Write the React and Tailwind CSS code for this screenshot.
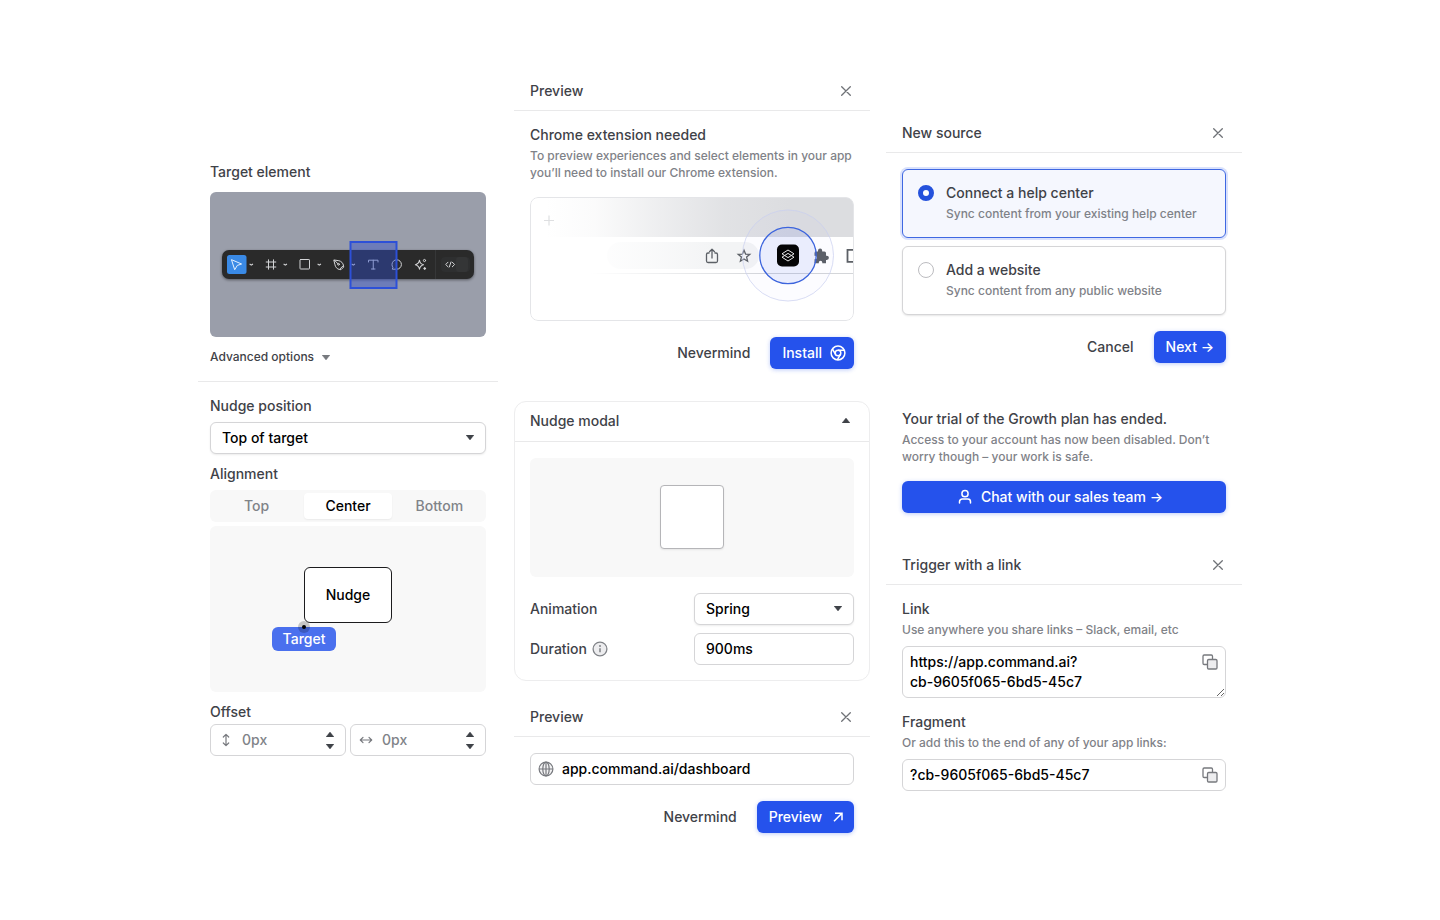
import { useState } from "react";

const LABEL = "text-sm leading-5 font-medium text-[#3f4248]";
const HINT = "text-xs leading-[17px] font-medium text-[#7f8288]";
const FIELD = "h-8 w-full rounded-md border border-[#d5d5d7] bg-white text-sm leading-5 font-medium outline-none";
const PRIMARY = "flex h-8 items-center justify-center rounded-md bg-[#2552ec] px-3 text-sm leading-5 font-medium text-white shadow-[0_1px_4px_rgba(37,82,236,0.3)]";
const PLAIN = "h-8 px-1 text-sm leading-5 font-medium text-[#3f4248]";

function Caret({ up = false, className = "" }) {
  return (
    <svg width="8" height="5" viewBox="0 0 8 5" aria-hidden="true" className={className}>
      <path d={up ? "M4 0 L8 5 H0 Z" : "M0 0 H8 L4 5 Z"} fill="currentColor" stroke="currentColor" strokeWidth=".4" strokeLinejoin="round" />
    </svg>
  );
}

function CloseButton() {
  return (
    <button type="button" aria-label="Close" className="flex size-4 items-center justify-center text-[#6f7277]">
      <svg width="10" height="10" viewBox="0 0 10 10" fill="none" stroke="currentColor" strokeWidth="1.3" strokeLinecap="round">
        <path d="M.7.7l8.6 8.6M9.3.7L.7 9.3" />
      </svg>
    </button>
  );
}

function PanelHeader({ title }) {
  return (
    <header className="flex h-10 items-center justify-between border-b border-[#e9e9ea] px-4">
      <h2 className={LABEL}>{title}</h2>
      <CloseButton />
    </header>
  );
}

function SelectField({ id, options }) {
  return (
    <div className="relative">
      <select id={id} className={`${FIELD} appearance-none px-[11px] text-black shadow-[0_1px_2px_rgba(0,0,0,0.08)]`}>
        {options.map((o) => (
          <option key={o}>{o}</option>
        ))}
      </select>
      <Caret className="pointer-events-none absolute top-[13px] right-3 text-[#3f4248]" />
    </div>
  );
}

function ToolbarDrawing() {
  const chevrons = [41, 75, 109, 143];
  return (
    <svg viewBox="0 0 276 145" className="block w-full rounded-md bg-[#9a9eaa]" role="img" aria-label="Toolbar with the text tool targeted">
      <defs>
        <filter id="barShadow" x="-10%" y="-50%" width="120%" height="220%">
          <feDropShadow dx="0" dy="1" stdDeviation="1.5" floodColor="#000" floodOpacity="0.45" />
        </filter>
      </defs>
      <rect x="12" y="58" width="252" height="29" rx="7" fill="#292a2b" filter="url(#barShadow)" />
      <path d="M225.500 58v29" stroke="#363738" />
      <rect x="231" y="65" width="29" height="15" rx="4" fill="#2e2f30" />
      <rect x="246" y="65" width="12" height="15" rx="3" fill="#343536" />
      <rect x="17" y="63" width="19.500" height="19" rx="2.500" fill="#3a8ae6" />
      <g fill="none" stroke="#d3d4d6" strokeWidth="1" strokeLinecap="round" strokeLinejoin="round">
        <path d="M21.800 67.800l9.800 4.200-4.300 1.400-2.400 4z" stroke="#e6f1ff" />
        {chevrons.map((x) => (
          <path key={x} d={`M${x - 1} 72.200l1.300.9 1.300-.9`} strokeWidth="1.100" />
        ))}
        <path d="M58.500 67.800v9.400M63.500 67.800v9.400M56.200 70h9.600M56.200 75h9.600" />
        <rect x="90" y="67.500" width="9.500" height="9.500" rx=".6" />
        <path d="M124.200 68l4.600.7c2.500.5 4.300 2.400 4.700 4.900l.2 1.400-2.700 2.700-1.400-.2c-2.500-.4-4.300-2.300-4.700-4.900zM124.500 68.300l3.600 3.600M129.700 77.200l3.800-3.800" />
        <circle cx="128.500" cy="72.300" r=".9" />
        <path d="M158.500 70v-1.800h9.500v1.800M163.250 68.200v8.800M161.500 77h3.500" />
        <path d="M182.700 77.200h4a4.700 4.700 0 1 0-4.700-4.700c0 1.400.3 1.800.7 2.600z" />
        <path d="M209.500 68.200c.4 3 1.200 3.800 4 4.500-2.800.7-3.600 1.500-4 4.500-.5-3-1.300-3.800-4.100-4.500 2.800-.7 3.600-1.500 4.100-4.500z" strokeWidth="1.100" />
        <circle cx="214.500" cy="68.500" r="1.100" />
        <circle cx="214.700" cy="76.500" r=".9" fill="#d3d4d6" />
        <path d="M238 70.200l-2.300 2.300 2.300 2.300M242.300 70.200l2.300 2.300-2.300 2.300M241 70l-1.700 5" />
      </g>
      <rect x="140.500" y="50" width="46" height="46" fill="#2f4fd0" fillOpacity=".42" stroke="#2d50d8" strokeWidth="2" />
    </svg>
  );
}

function BrowserDrawing() {
  return (
    <svg viewBox="0 0 324 124" className="block w-full rounded-lg" role="img" aria-label="Extension button in the browser toolbar">
      <defs>
        <linearGradient id="tabStrip" x1="0" x2="1">
          <stop offset=".05" stopColor="#dcdde0" stopOpacity="0" />
          <stop offset=".2" stopColor="#dcdde0" stopOpacity=".12" />
          <stop offset=".4" stopColor="#dcdde0" stopOpacity=".5" />
          <stop offset=".6" stopColor="#dcdde0" stopOpacity=".85" />
          <stop offset=".8" stopColor="#dcdde0" />
        </linearGradient>
        <linearGradient id="omnibox" x1="0" x2="1">
          <stop offset="0" stopColor="#f5f6f7" stopOpacity=".2" />
          <stop offset=".7" stopColor="#f3f4f5" />
        </linearGradient>
        <linearGradient id="rule" gradientUnits="userSpaceOnUse" x1="60" x2="240" y1="0" y2="0">
          <stop offset="0" stopColor="#d4d6d9" stopOpacity="0" />
          <stop offset="1" stopColor="#d4d6d9" />
        </linearGradient>
        <clipPath id="frame">
          <rect x=".5" y=".5" width="323" height="123" rx="7.500" />
        </clipPath>
      </defs>
      <g clipPath="url(#frame)">
        <rect width="324" height="124" fill="#fff" />
        <rect width="324" height="40" fill="url(#tabStrip)" />
        <path d="M14 23.500h10M19 18.500v10" stroke="#dedfe1" strokeWidth="1.200" />
        <rect x="77" y="45" width="152" height="27" rx="13.500" fill="url(#omnibox)" />
        <rect x="60" y="76" width="264" height="1" fill="url(#rule)" />
        <g fill="none" stroke="#5c6066" strokeWidth="1.300" strokeLinejoin="round">
          <path d="M179.500 56h-1.500a1.500 1.500 0 0 0-1.500 1.500v6.500a1.500 1.500 0 0 0 1.500 1.500h8a1.500 1.500 0 0 0 1.500-1.500v-6.500a1.500 1.500 0 0 0-1.500-1.500h-1.500M182 61.500v-9M179.200 55l2.800-2.800 2.800 2.800" />
          <path strokeLinejoin="miter" d="M214 53.200l1.600 3.900 4.200.3-3.200 2.700 1 4.100-3.600-2.200-3.600 2.200 1-4.100-3.200-2.700 4.200-.3z" />
          <path d="M326 52.800h-8.500v12h8.500" strokeWidth="1.800" strokeLinejoin="miter" />
        </g>
        <path fill="#5c6066" d="M285 54.500h3v-.8a2.100 2.100 0 0 1 4.200 0v.8h2.300a1.500 1.500 0 0 1 1.500 1.500v2.700h.8a2.100 2.100 0 0 1 0 4.200h-.8v3.300h-3.700v-.8a1.700 1.700 0 0 0-3.500 0v.8h-4.300v-4h.8a1.700 1.700 0 0 0 0-3.500h-.8v-2.700z" />
        <circle cx="258" cy="58.500" r="45.500" fill="#4e6df0" fillOpacity=".02" stroke="#c9cff0" strokeOpacity=".7" strokeWidth="1" />
        <circle cx="258" cy="58.500" r="28.200" fill="#4e6df0" fillOpacity=".1" stroke="#3c64dd" strokeWidth="1.300" />
        <rect x="247" y="47.500" width="22" height="22" rx="5" fill="#050506" />
        <g fill="none" stroke="#e9e9ea" strokeWidth="1" strokeLinejoin="round">
          <path d="M258 53l6 3.800-6 3.800-6-3.800z" />
          <path d="M258 56.400l6 3.800-6 3.800-6-3.800z" />
        </g>
      </g>
      <rect x=".5" y=".5" width="323" height="123" rx="7.500" fill="none" stroke="#e4e5e8" />
    </svg>
  );
}

function OffsetField({ label, vertical }) {
  return (
    <div className="relative flex-1">
      <input type="text" aria-label={label} defaultValue="0px" className={`${FIELD} pr-8 pb-0.5 pl-[31px] text-[#808388]`} />
      <svg width="14" height="14" viewBox="0 0 14 14" fill="none" stroke="#77797e" strokeWidth="1.2" strokeLinecap="round" strokeLinejoin="round" aria-hidden="true" className="pointer-events-none absolute top-[9px] left-[9px]">
        {vertical ? (
          <path d="M7 1.500v11M4.300 4l2.700-2.700L9.700 4M4.300 10l2.700 2.700L9.700 10" />
        ) : (
          <path d="M1.500 7h11M4 4.300L1.300 7 4 9.700M10 4.300L12.700 7 10 9.700" />
        )}
      </svg>
      <div className="absolute inset-y-0 right-3 flex flex-col justify-center gap-[7px] text-[#3f4248]">
        <button type="button" aria-label={`Increase ${label}`}><Caret up className="block" /></button>
        <button type="button" aria-label={`Decrease ${label}`}><Caret className="block" /></button>
      </div>
    </div>
  );
}

function TargetPanel() {
  const [align, setAlign] = useState("Center");
  return (
    <section className="w-[300px]">
      <div className="flex flex-col gap-2.5 border-b border-[#e9e9ea] px-3 pt-2.5 pb-[14px]">
        <h2 className={LABEL}>Target element</h2>
        <ToolbarDrawing />
        <button type="button" className="flex items-center gap-2 text-xs leading-5 font-medium text-[#3f4248]">
          Advanced options
          <Caret className="text-[#77797e]" />
        </button>
      </div>
      <div className="px-3 pt-[14px] pb-3">
        <label htmlFor="position" className={`${LABEL} mb-1.5 block`}>Nudge position</label>
        <SelectField id="position" options={["Top of target", "Bottom of target"]} />
        <h3 className={`${LABEL} mt-2.5 mb-1.5`}>Alignment</h3>
        <div className="grid h-8 grid-cols-3 gap-1 rounded-md bg-[#f8f8f8] p-[3px]">
          {["Top", "Center", "Bottom"].map((a) => (
            <button
              key={a}
              type="button"
              aria-pressed={a === align}
              onClick={() => setAlign(a)}
              className={`rounded text-sm leading-5 font-medium ${a === align ? "bg-white text-black shadow-[0_1px_2px_rgba(0,0,0,0.06)]" : "text-[#808388]"}`}
            >
              {a}
            </button>
          ))}
        </div>
        <div className="relative mt-1 h-[166px] rounded-md bg-[#f8f8f8] text-sm leading-5 font-medium">
          <div className="absolute top-[41px] left-[94px] flex h-14 w-[88px] items-center justify-center rounded-md border border-[#1c1c1e] bg-white text-black">Nudge</div>
          <div className="absolute top-[101px] left-[62px] flex h-6 w-16 items-center justify-center rounded-md bg-[#4a70ee] text-white">Target</div>
          <div className="absolute top-[95px] left-[88px] flex size-3 items-center justify-center rounded-full bg-black/20">
            <div className="size-1 rounded-full bg-black" />
          </div>
        </div>
        <h3 className={`${LABEL} mt-2.5 mb-0.5`}>Offset</h3>
        <div className="flex gap-1">
          <OffsetField label="Vertical offset" vertical />
          <OffsetField label="Horizontal offset" />
        </div>
      </div>
    </section>
  );
}

function ExtensionPanel() {
  return (
    <section>
      <PanelHeader title="Preview" />
      <div className="px-4 pt-[14px] pb-4">
        <h3 className={LABEL}>Chrome extension needed</h3>
        <p className={`${HINT} mt-0.5 mb-4`}>
          To preview experiences and select elements in your app you’ll need to install our Chrome extension.
        </p>
        <BrowserDrawing />
        <div className="mt-4 flex justify-end gap-4">
          <button type="button" className={PLAIN}>Nevermind</button>
          <button type="button" className={`${PRIMARY} gap-2 pr-2`}>
            Install
            <svg width="16" height="16" viewBox="0 0 16 16" fill="none" stroke="currentColor" strokeWidth="1.5" aria-hidden="true">
              <circle cx="8" cy="8" r="6.900" />
              <circle cx="8" cy="8" r="2.800" />
              <path d="M8 5.200h6.200M5.600 9.400L2.400 4M10.400 9.400L7.300 14.800" />
            </svg>
          </button>
        </div>
      </div>
    </section>
  );
}

function ModalPanel() {
  return (
    <section className="rounded-xl border border-[#ededee]">
      <header className="flex h-10 items-center justify-between border-b border-[#e9e9ea] pr-[19px] pb-0.5 pl-[15px]">
        <h2 className={LABEL}>Nudge modal</h2>
        <button type="button" aria-label="Collapse" className="text-[#3f4248]"><Caret up className="block" /></button>
      </header>
      <div className="px-[15px] pt-4 pb-[15px]">
        <div className="flex h-[119px] items-start justify-center rounded-md bg-[#f8f8f8] pt-[27px]">
          <div className="size-16 rounded border border-[#b5b5b8] bg-white shadow-[0_1px_2px_rgba(0,0,0,0.08)]" />
        </div>
        <div className="mt-4 grid grid-cols-[1fr_160px] items-center gap-y-2">
          <label htmlFor="animation" className={LABEL}>Animation</label>
          <SelectField id="animation" options={["Spring", "Fade"]} />
          <label htmlFor="duration" className={`${LABEL} flex items-center gap-[5px]`}>
            Duration
            <svg width="16" height="16" viewBox="0 0 16 16" aria-hidden="true">
              <circle cx="8" cy="8" r="6.900" fill="#ededef" stroke="#808388" strokeWidth="1.300" />
              <path d="M8 7.300v4" stroke="#77797e" strokeWidth="1.400" />
              <circle cx="8" cy="5" r=".9" fill="#77797e" />
            </svg>
          </label>
          <input id="duration" type="text" defaultValue="900ms" className={`${FIELD} px-[11px] pb-0.5 text-black`} />
        </div>
      </div>
    </section>
  );
}

function UrlPanel() {
  return (
    <section>
      <PanelHeader title="Preview" />
      <div className="p-4">
        <div className="relative">
          <input type="text" aria-label="Page address" defaultValue="app.command.ai/dashboard" className={`${FIELD} pr-2 pb-0.5 pl-[31px] text-black`} />
          <svg width="16" height="16" viewBox="0 0 16 16" fill="none" stroke="#77797e" strokeWidth="1.2" aria-hidden="true" className="pointer-events-none absolute top-2 left-2">
            <circle cx="8" cy="8" r="6.900" fill="#f1f1f2" />
            <ellipse cx="8" cy="8" rx="3.200" ry="6.900" />
            <path d="M1.100 8h13.800M8 1.100v13.800" />
          </svg>
        </div>
        <div className="mt-4 flex justify-end gap-4">
          <button type="button" className={PLAIN}>Nevermind</button>
          <button type="button" className={`${PRIMARY} gap-2 pr-2`}>
            Preview
            <svg width="16" height="16" viewBox="0 0 16 16" fill="none" stroke="currentColor" strokeWidth="1.5" aria-hidden="true">
              <path d="M4 12.200l7.800-7.800M5 4.300h7v7" />
            </svg>
          </button>
        </div>
      </div>
    </section>
  );
}

const SOURCES = [
  { id: "help", title: "Connect a help center", hint: "Sync content from your existing help center" },
  { id: "site", title: "Add a website", hint: "Sync content from any public website" },
];

function SourcePanel() {
  const [source, setSource] = useState("help");
  return (
    <section>
      <PanelHeader title="New source" />
      <div className="p-4">
        <div className="flex flex-col gap-2">
          {SOURCES.map((s) => (
            <label
              key={s.id}
              className={`flex gap-3 rounded-md border px-[15px] pt-[13px] pb-[15px] ${s.id === source ? "border-[#3f68e2] bg-[#f5f7fe] shadow-[0_0_0_2px_#d9e1fc]" : "border-[#d5d5d7] bg-white shadow-[0_1px_2px_rgba(0,0,0,0.1)]"}`}
            >
              <input
                type="radio"
                name="source"
                checked={s.id === source}
                onChange={() => setSource(s.id)}
                className="mt-0.5 size-4 shrink-0 appearance-none rounded-full border border-[#bcbcc0] bg-white checked:border-[5px] checked:border-[#2552dc]"
              />
              <span>
                <span className={`${LABEL} block`}>{s.title}</span>
                <span className={`${HINT} mt-0.5 block`}>{s.hint}</span>
              </span>
            </label>
          ))}
        </div>
        <div className="mt-4 flex justify-end gap-4">
          <button type="button" className={PLAIN}>Cancel</button>
          <button type="button" className={PRIMARY}>Next →</button>
        </div>
      </div>
    </section>
  );
}

function TrialPanel() {
  return (
    <section className="px-4 pt-[14px] pb-4">
      <h2 className={LABEL}>Your trial of the Growth plan has ended.</h2>
      <p className={`${HINT} mt-0.5 mb-4`}>
        Access to your account has now been disabled. Don’t worry though – your work is safe.
      </p>
      <button type="button" className={`${PRIMARY} w-full gap-2 pr-5`}>
        <svg width="16" height="16" viewBox="0 0 16 16" fill="none" stroke="currentColor" strokeWidth="1.5" strokeLinecap="round" aria-hidden="true">
          <circle cx="8" cy="4.700" r="3.100" />
          <path d="M2.500 14v-1.200a2.700 2.700 0 0 1 2.700-2.700h5.600a2.700 2.700 0 0 1 2.700 2.700V14" />
        </svg>
        Chat with our sales team →
      </button>
    </section>
  );
}

function CopyButton({ label }) {
  return (
    <button type="button" aria-label={label} className="absolute top-2 right-2 text-[#77797e]">
      <svg width="16" height="16" viewBox="0 0 16 16" fill="none" stroke="currentColor" strokeWidth="1.300" strokeLinejoin="round" className="block">
        <path d="M5.500 10.500H2.200A1.200 1.200 0 0 1 1 9.300V2.200A1.200 1.200 0 0 1 2.200 1h7.100a1.200 1.200 0 0 1 1.200 1.200v3.300" />
        <rect x="5.500" y="5.500" width="9.500" height="9.500" rx="1.200" fill="#ededef" />
      </svg>
    </button>
  );
}

function LinkPanel() {
  return (
    <section>
      <PanelHeader title="Trigger with a link" />
      <div className="px-4 pt-[14px] pb-4">
        <label htmlFor="link" className={`${LABEL} block`}>Link</label>
        <p className={`${HINT} mt-0.5 mb-2`}>Use anywhere you share links – Slack, email, etc</p>
        <div className="relative mb-[14px]">
          <textarea
            id="link"
            rows={2}
            defaultValue={"https://app.command.ai?\ncb-9605f065-6bd5-45c7"}
            className="block h-[52px] w-full resize-y overflow-hidden rounded-md border border-[#d5d5d7] bg-white px-[7px] py-[5px] text-sm leading-5 font-medium text-black outline-none"
          />
          <CopyButton label="Copy link" />
        </div>
        <label htmlFor="fragment" className={`${LABEL} block`}>Fragment</label>
        <p className={`${HINT} mt-0.5 mb-2`}>Or add this to the end of any of your app links:</p>
        <div className="relative">
          <input id="fragment" type="text" defaultValue="?cb-9605f065-6bd5-45c7" className={`${FIELD} pr-8 pb-0.5 pl-[7px] text-black`} />
          <CopyButton label="Copy fragment" />
        </div>
      </div>
    </section>
  );
}

export default function App() {
  return (
    <main className="flex min-h-screen items-center justify-center gap-4 bg-white font-['Inter',sans-serif]">
      <TargetPanel />
      <div className="flex w-[356px] flex-col gap-4">
        <ExtensionPanel />
        <ModalPanel />
        <UrlPanel />
      </div>
      <div className="flex w-[356px] flex-col gap-4">
        <SourcePanel />
        <TrialPanel />
        <LinkPanel />
      </div>
    </main>
  );
}
